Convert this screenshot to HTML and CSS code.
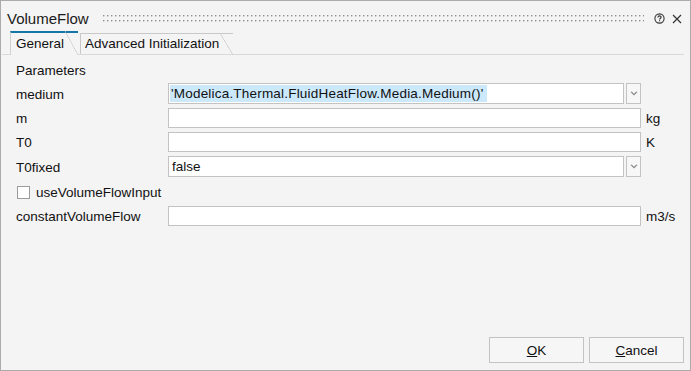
FILE: index.html
```html
<!DOCTYPE html>
<html>
<head>
<meta charset="utf-8">
<link rel="stylesheet" href="styles.css">
</head>
<body>
<div class="dialog">
  <div class="titlebar">
    <span class="title">VolumeFlow</span>
    <svg class="grip" height="10">
      <defs>
        <pattern id="dots" width="4" height="5" patternUnits="userSpaceOnUse">
          <rect x="1" y="1" width="1.4" height="1.4" fill="#8e8e8e"/>
        </pattern>
      </defs>
      <rect width="100%" height="10" fill="url(#dots)"/>
    </svg>
    <svg class="help" width="11" height="11" viewBox="0 0 11 11">
      <circle cx="5.5" cy="5.5" r="4.6" fill="none" stroke="#333" stroke-width="1.1"/>
      <path d="M3.9 4.4 C3.9 3.4 4.6 2.9 5.5 2.9 C6.4 2.9 7.1 3.4 7.1 4.2 C7.1 5.2 5.6 5.3 5.6 6.4" fill="none" stroke="#333" stroke-width="1.1"/>
      <rect x="5" y="7.2" width="1.1" height="1.1" fill="#333"/>
    </svg>
    <svg class="close" width="10" height="10" viewBox="0 0 10 10">
      <path d="M1 1 L9 9 M9 1 L1 9" stroke="#333" stroke-width="1.2" fill="none"/>
    </svg>
  </div>
  <div class="tabs">
    <div class="tab active">General</div>
    <div class="tab">Advanced Initialization</div>
  </div>
  <div class="content">
    <div class="form">
      <div class="section">Parameters</div>
      <label class="lbl">medium</label>
      <div class="combo">
        <div class="field"><span class="sel">'Modelica.Thermal.FluidHeatFlow.Media.Medium()'</span></div>
        <div class="drop"><svg width="8" height="6" viewBox="0 0 8 6"><path d="M0.5 1 L4 4.5 L7.5 1 L6.3 0.5 L4 2.8 L1.7 0.5 Z" fill="#8a8a8a"/></svg></div>
      </div>
      <span></span>
      <label class="lbl">m</label>
      <div class="field edit"></div>
      <span class="unit">kg</span>
      <label class="lbl">T0</label>
      <div class="field edit"></div>
      <span class="unit">K</span>
      <label class="lbl">T0fixed</label>
      <div class="combo">
        <div class="field">false</div>
        <div class="drop"><svg width="8" height="6" viewBox="0 0 8 6"><path d="M0.5 1 L4 4.5 L7.5 1 L6.3 0.5 L4 2.8 L1.7 0.5 Z" fill="#8a8a8a"/></svg></div>
      </div>
      <span></span>
      <div class="check"><span class="box"></span>useVolumeFlowInput</div>
      <label class="lbl">constantVolumeFlow</label>
      <div class="field edit"></div>
      <span class="unit">m3/s</span>
    </div>
  </div>
  <div class="footer">
    <button class="btn"><u>O</u>K</button>
    <button class="btn"><u>C</u>ancel</button>
  </div>
</div>
</body>
</html>
```
FILE: styles.css
```css
html, body {
  margin: 0;
  padding: 0;
  background: #f4f4f4;
}
body {
  font-family: "Liberation Sans", Arial, sans-serif;
  font-size: 13.5px;
  color: #111;
}
.dialog {
  width: 691px;
  height: 371px;
  box-sizing: border-box;
  border: 1px solid #ababab;
  background: #f4f4f4;
  display: flex;
  flex-direction: column;
}
.titlebar {
  height: 30px;
  display: flex;
  align-items: center;
  padding-left: 6px;
  padding-right: 8px;
  box-sizing: border-box;
}
.title {
  font-size: 15px;
  color: #1a1a1a;
  margin-top: 5px;
}
.grip {
  flex: 1;
  min-width: 0;
  height: 10px;
  margin: 6px 10px 0 13px;
}
.help {
  margin-top: 5px;
  margin-right: 7px;
}
.close {
  margin-top: 5px;
}
.tabs {
  height: 24px;
  box-sizing: border-box;
  display: flex;
  align-items: flex-end;
  margin: 0 6px 0 1px;
  padding-left: 8px;
  border-bottom: 1px solid #d9d9d9;
}
.tab {
  position: relative;
  height: 21px;
  box-sizing: border-box;
  border-top: 1px solid #c8c8c8;
  border-left: 1px solid #c8c8c8;
  padding: 0 14px 0 4px;
  line-height: 20px;
  margin-right: 2px;
}
.tab::after {
  content: "";
  position: absolute;
  top: -1px;
  right: 0;
  width: 13px;
  height: 22px;
  background: linear-gradient(to top right, transparent calc(50% - 0.6px), #c8c8c8 50%, transparent calc(50% + 0.6px));
}
.tab.active {
  height: 24px;
  margin-bottom: -1px;
  border-top: 2px solid #1677a6;
  padding-left: 5px;
  padding-right: 14px;
  line-height: 21px;
  background: #f4f4f4;
  border-left-color: #d0d0d0;
}
.tab.active::after {
  top: -2px;
  height: 24px;
}
.content {
  flex: 1;
  padding: 8px 0 0 15px;
}
.form {
  display: grid;
  grid-template-columns: 152px 473px auto;
  grid-template-rows: 16px 21px 20px 20px 21px 21px 20px;
  row-gap: 4px;
  align-items: center;
}
.section {
  grid-column: 1 / -1;
  line-height: 16px;
}
.lbl {
  line-height: 16px;
  padding-top: 2px;
}
.field {
  box-sizing: border-box;
  height: 20px;
  border: 1px solid #c3c3c3;
  background: #fff;
  padding-left: 3px;
  line-height: 18px;
  white-space: nowrap;
  overflow: hidden;
}
.combo {
  display: flex;
  gap: 2px;
  height: 21px;
}
.combo .field {
  flex: 1;
  height: 21px;
  line-height: 19px;
  padding-left: 3px;
}
.combo .field:has(.sel) {
  padding-left: 1px;
}
.sel {
  background: #cce8fb;
  padding: 0 4px 0 1px;
  display: inline-block;
  line-height: 17px;
  margin-top: 1px;
  letter-spacing: 0.2px;
}
.drop {
  width: 15px;
  box-sizing: border-box;
  border: 1px solid #c3c3c3;
  background: #f7f7f7;
  display: flex;
  align-items: center;
  justify-content: center;
}
.unit {
  padding-left: 5px;
  line-height: 16px;
  padding-top: 2px;
}
.check {
  grid-column: 1 / -1;
  display: flex;
  align-items: center;
  line-height: 16px;
  padding-top: 2px;
}
.box {
  width: 13px;
  height: 13px;
  box-sizing: border-box;
  border: 1px solid #9c9c9c;
  background: #fff;
  margin: 0 6px 0 1px;
}
.footer {
  display: flex;
  justify-content: flex-end;
  gap: 5px;
  padding: 0 6px 7px 0;
}
.btn {
  width: 95px;
  height: 26px;
  box-sizing: border-box;
  border: 1px solid #c3c3c3;
  background: #f6f6f6;
  font-family: "Liberation Sans", Arial, sans-serif;
  font-size: 13.5px;
  color: #111;
  border-radius: 0;
  padding: 0;
}
```
